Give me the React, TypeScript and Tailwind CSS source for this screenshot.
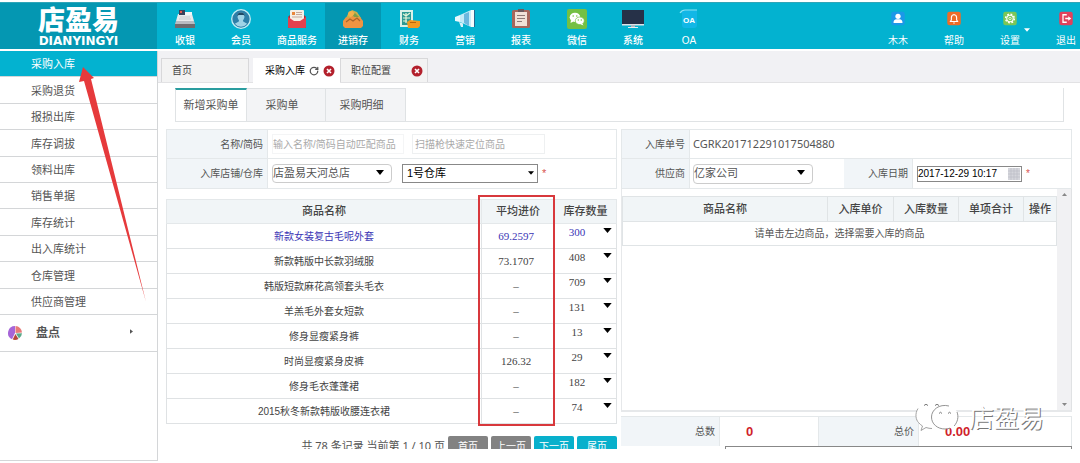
import type { ReactNode } from "react";
import { RotateCw } from "lucide-react";

type NavItem = { label: string; icon: ReactNode };

type Product = {
  name: string;
  price: string;
  stock: number;
};

const products: Product[] = [
  { name: "新款女装复古毛呢外套", price: "69.2597", stock: 300 },
  { name: "新款韩版中长款羽绒服", price: "73.1707", stock: 408 },
  { name: "韩版短款麻花高领套头毛衣", price: "–", stock: 709 },
  { name: "羊羔毛外套女短款", price: "–", stock: 131 },
  { name: "修身显瘦紧身裤", price: "–", stock: 13 },
  { name: "时尚显瘦紧身皮裤", price: "126.32", stock: 29 },
  { name: "修身毛衣蓬蓬裙", price: "–", stock: 182 },
  { name: "2015秋冬新款韩版收腰连衣裙", price: "–", stock: 74 },
];

const menu = [
  "采购入库",
  "采购退货",
  "报损出库",
  "库存调拔",
  "领料出库",
  "销售单据",
  "库存统计",
  "出入库统计",
  "仓库管理",
  "供应商管理",
];

const navItems: NavItem[] = [
  {
    label: "收银",
    icon: (
      <>
        <path d="M3 5h14l2 7H1z" fill="#e9eaec" />
        <path d="M4 1h6v5H4z" fill="#39415c" />
        <path d="M5 2h2v2H5z" fill="#e2574c" />
        <path d="M10 3h7v3h-7z" fill="#f4f6f7" />
        <path d="M5 8h10M4 10h12" stroke="#c9cbd0" strokeWidth="1" />
        <path d="M1 12h18l1 3H0z" fill="#b9bcc2" />
        <path d="M0 15h20v4H0z" fill="#6f6b6f" />
      </>
    ),
  },
  {
    label: "会员",
    icon: (
      <>
        <circle cx="10" cy="10" r="9.3" fill="#2d7fa8" stroke="#c5eef5" strokeWidth="1.3" />
        <path d="M6.5 7.5a3.5 4 0 0 1 7 0c0 2-1 3-1.500 3.800l.2 1.200 4 2.300A8 8 0 0 1 3.800 14.800l4-2.300.2-1.200C7.500 10.500 6.500 9.500 6.500 7.500z" fill="#9fd3e6" />
        <path d="M6.300 7.500a3.700 4 0 0 1 7.400 0l-1-1.500H7.500z" fill="#204a66" />
      </>
    ),
  },
  {
    label: "商品服务",
    icon: (
      <>
        <path d="M1 8l3-3h12l3 3v10a1 1 0 0 1-1 1H2a1 1 0 0 1-1-1z" fill="#a92b37" />
        <rect x="3" y="1" width="14" height="11" rx="1" fill="#f5efe6" />
        <path d="M9 3h6v1H9zM9 5h6v1H9zM5 7.500h10v1H5z" fill="#c4a79a" />
        <path d="M5 3h3v3H5z" fill="#e8873c" />
        <path d="M1 8l6 4h6l6-4v10a1 1 0 0 1-1 1H2a1 1 0 0 1-1-1z" fill="#e2404e" />
      </>
    ),
  },
  {
    label: "进销存",
    icon: (
      <>
        <path d="M3 9l2-4 4-4 5 2 4 6v4H2z" fill="#c9b04c" />
        <circle cx="8" cy="5" r="3" fill="#f3b04b" />
        <path d="M9 8l3-4 4 4z" fill="#7f9d47" />
        <path d="M0 12l3-4 3 1 4-2 3 2 4-1 3 4v5l-2 2H2l-2-2z" fill="#ef9442" />
        <path d="M3 13l4-3 3 2 4-3 3 3" stroke="#a9642b" strokeWidth="1.200" fill="none" />
      </>
    ),
  },
  {
    label: "财务",
    icon: (
      <>
        <path d="M1 1h13v17H1z" fill="#d9f1e9" />
        <path d="M3 3h9v13H3z" fill="#2e9a94" />
        <path d="M4 5l3 2 4-3M4 9h7M4 12h4M7 4v10" stroke="#e7f6d9" strokeWidth="1.200" fill="none" />
        <path d="M8 13l3-2 10 1v5l-2 2H9z" fill="#f19a22" />
        <path d="M11 13.500h6" stroke="#b8660b" strokeWidth="1" />
      </>
    ),
  },
  {
    label: "营销",
    icon: (
      <>
        <path d="M0 8l5-2v7l-5-1z" fill="#e9f8fd" />
        <path d="M5 6l11-5v17L5 13z" fill="#c4ebf8" />
        <path d="M9 5l5-2v14l-5-3z" fill="#6bb7de" />
        <path d="M16 1h3v17h-3z" fill="#f4fbfd" />
        <path d="M19 1h1v17h-1z" fill="#27668f" />
        <path d="M4 13l4 1.500V18H6z" fill="#d9f1f9" />
      </>
    ),
  },
  {
    label: "报表",
    icon: (
      <>
        <rect x="1" y="1" width="18" height="18" rx="1.500" fill="#a6675c" />
        <path d="M4 3h12v14H4z" fill="#f0e2d8" />
        <path d="M7 0h6v3H7z" fill="#6b5a5e" />
        <path d="M6 6.500h8M6 9.500h8M6 12.500h5" stroke="#8d7b78" strokeWidth="1.200" />
      </>
    ),
  },
  {
    label: "微信",
    icon: (
      <>
        <rect width="20" height="20" rx="2" fill="#74c043" />
        <ellipse cx="8" cy="8.300" rx="5.300" ry="4.600" fill="#fff" />
        <path d="M4 11l-.5 3 3-1.500z" fill="#fff" />
        <ellipse cx="12.800" cy="11.800" rx="4.500" ry="3.800" fill="#fff" stroke="#74c043" strokeWidth=".7" />
        <path d="M15 14l1.500 2.500-3-1.200z" fill="#fff" />
        <g fill="#74c043">
          <circle cx="6.200" cy="7" r=".8" />
          <circle cx="9.800" cy="7" r=".8" />
          <circle cx="11.300" cy="11" r=".7" />
          <circle cx="14.300" cy="11" r=".7" />
        </g>
      </>
    ),
  },
  {
    label: "系统",
    icon: (
      <>
        <path d="M-1 1h22v14H-1z" fill="#263148" />
        <path d="M-1 15h22v1.500H-1z" fill="#dce3e8" />
        <path d="M8 16h4v2H8z" fill="#aebac2" />
        <path d="M5 18h10v1H5z" fill="#e8eef1" />
      </>
    ),
  },
  {
    label: "OA",
    icon: (
      <>
        <path d="M1 4q2-3 5-3h12v15a3 3 0 0 1-3 3H6a3 3 0 0 1-3-3V4z" fill="#12b7e6" />
        <path d="M1 4q2-3 5-3h12" stroke="#8ce3f4" strokeWidth="1.200" fill="none" />
        <text x="10" y="13.500" textAnchor="middle" fontSize="8" fontWeight="bold" fill="#fff">
          OA
        </text>
      </>
    ),
  },
];

const userItems: NavItem[] = [
  {
    label: "木木",
    icon: (
      <>
        <rect x="1" y="1" width="18" height="18" rx="3" fill="#1b98e8" />
        <circle cx="10" cy="7" r="3.500" fill="#fff" />
        <path d="M4 16q0-5 4-5h4q4 0 4 5z" fill="#fff" />
      </>
    ),
  },
  {
    label: "帮助",
    icon: (
      <>
        <rect x="1" y="1" width="18" height="18" rx="3" fill="#ee6c27" />
        <path d="M5 14h10l-1.500-2V9a3.500 4 0 0 0-7 0v3zM9 16h2M10 4v1" stroke="#fff" strokeWidth="1.500" fill="none" strokeLinejoin="round" />
      </>
    ),
  },
  {
    label: "设置",
    icon: (
      <>
        <rect x="1" y="1" width="18" height="18" rx="3" fill="#7cc656" />
        <circle cx="10" cy="10" r="5.800" fill="none" stroke="#fff" strokeWidth="2" strokeDasharray="2.400 2.155" />
        <circle cx="10" cy="10" r="4.300" fill="none" stroke="#fff" strokeWidth="1.500" />
        <circle cx="10" cy="10" r="1.600" fill="none" stroke="#fff" strokeWidth="1" />
      </>
    ),
  },
  {
    label: "退出",
    icon: (
      <>
        <rect x="1" y="1" width="18" height="18" rx="3" fill="#e2415c" />
        <path d="M11 5H6v10h5" stroke="#fff" strokeWidth="1.700" fill="none" />
        <path d="M9 9h4V7l4 3-4 3v-2H9z" fill="#fff" />
      </>
    ),
  },
];

function Caret({ className }: { className?: string }) {
  return (
    <svg viewBox="0 0 10 6" className={className} aria-hidden="true">
      <path d="M0 0h10L5 6z" fill="currentColor" />
    </svg>
  );
}

function CloseBadge() {
  return (
    <svg viewBox="0 0 12 12" className="size-3" aria-hidden="true">
      <circle cx="6" cy="6" r="5.500" fill="#b3202c" />
      <path d="M4 4l4 4M8 4l-4 4" stroke="#fff" strokeWidth="1.600" />
    </svg>
  );
}

function Header() {
  return (
    <header className="my-0.5 flex h-[47px] shrink-0 border-t border-[#2fa5b8] bg-[#03b2d0] text-white">
      <div className="flex w-[157px] shrink-0 flex-col items-center bg-[#0497b2] pt-1">
        <span className="text-[27px] leading-7 font-black">店盈易</span>
        <span className="font-['DejaVu_Sans',sans-serif] text-xs leading-3 font-bold">DIANYINGYI</span>
      </div>
      <nav className="flex">
        {navItems.map((item) => (
          <a
            key={item.label}
            href="#"
            className={`flex w-14 flex-col items-center pt-1.5 ${item.label === "进销存" ? "bg-[#0497b2]" : ""}`}
          >
            <svg viewBox="0 0 20 20" className="size-5 overflow-visible" aria-hidden="true">
              {item.icon}
            </svg>
            <span className="mt-1 text-[10px] leading-4 font-medium">{item.label}</span>
          </a>
        ))}
      </nav>
      <nav className="ml-auto flex gap-7">
        {userItems.map((item) => (
          <a key={item.label} href="#" className="relative flex w-7 flex-col items-center pt-2">
            <svg viewBox="0 0 20 20" className="size-[18px]" aria-hidden="true">
              {item.icon}
            </svg>
            <span className="mt-[7px] text-[10px] leading-4">{item.label}</span>
            {item.label === "设置" && <Caret className="absolute top-6 -right-1.5 h-1.5 w-1.5" />}
          </a>
        ))}
      </nav>
    </header>
  );
}

function Sidebar() {
  return (
    <aside className="mb-0.5 w-[158px] shrink-0 border-r border-b border-[#d4d6d8] text-[11px] text-[#555]">
      <ul className="grid h-[264px] auto-rows-fr">
        {menu.map((label, index) => (
          <li
            key={label}
            className={`border-b border-[#d4d6d8] ${index === 0 ? "bg-[#03b2d0] text-white" : ""}`}
          >
            <a href="#" className="flex h-full items-center pt-0.5 pl-[31px]">
              {label}
            </a>
          </li>
        ))}
      </ul>
      <a href="#" className="flex h-[37px] items-center border-b border-[#d4d6d8] pl-2 text-xs font-bold">
        <svg viewBox="0 0 14 14" className="size-3.5" aria-hidden="true">
          <path d="M7 0a7 7 0 0 0-3 13.300L7 7z" fill="#a665d8" />
          <path d="M7.500 0A7 7 0 0 1 14 6.500L7.500 7z" fill="#e77a78" />
          <path d="M14 7.300A7 7 0 0 1 11 12.500L8 7.500z" fill="#5aa98a" />
          <path d="M4.700 13.600A7 7 0 0 0 10.500 12.900L7.400 8z" fill="#b5483a" />
        </svg>
        <span className="ml-3.5">盘点</span>
        <svg viewBox="0 0 4 6" className="mr-6 mb-1 ml-auto h-[5px] w-[3px]" aria-hidden="true">
          <path d="M0 0l4 3-4 3z" fill="#555" />
        </svg>
      </a>
    </aside>
  );
}

function PageTabs() {
  return (
    <div className="flex h-8 shrink-0 items-end gap-1 border-b border-[#e2e2e4] bg-[#f1f1f4] pl-[3px] text-[10px] text-[#444]">
      <button type="button" className="h-6 w-[88px] border border-b-0 border-[#d8d8da] bg-[#f3f3f3] pl-2.5 text-left">
        首页
      </button>
      <div className="-mb-px flex h-[25px] w-[87px] items-center bg-white pl-3 text-black">
        <span>采购入库</span>
        <button type="button" aria-label="刷新" className="ml-1">
          <RotateCw className="size-2.5" strokeWidth={3} color="#555" />
        </button>
        <button type="button" aria-label="关闭采购入库" className="ml-1">
          <CloseBadge />
        </button>
      </div>
      <div className="-ml-1 flex h-6 w-[88px] items-center justify-between border border-b-0 border-[#d8d8da] bg-[#f3f3f3] pr-1 pl-2.5">
        <span>职位配置</span>
        <button type="button" aria-label="关闭职位配置">
          <CloseBadge />
        </button>
      </div>
    </div>
  );
}

function SubTabs() {
  return (
    <div className="mr-2 flex h-[34px] shrink-0 border-r border-b border-[#e0e3e5] text-[11px] text-[#555]">
      <button type="button" className="w-[72px] border-t-2 border-r border-l border-t-[#2a9d9f] border-r-[#e0e3e5] border-l-[#e0e3e5] bg-white">
        新增采购单
      </button>
      <button type="button" className="w-[79px] border-t border-r border-[#dfe2e4] bg-[#f3f4f6] pr-2">
        采购单
      </button>
      <button type="button" className="w-20 border-t border-r border-[#dfe2e4] bg-[#f3f4f6] pr-2">
        采购明细
      </button>
    </div>
  );
}

const labelCell = "flex items-center justify-end border-r border-[#e4e8ea] bg-[#f1f5f8] pr-1";

function ProductForm() {
  return (
    <form className="grid grid-cols-[101px_1fr] grid-rows-[29px_29px] border border-[#e4e8ea] text-[10px] text-[#555]">
      <label htmlFor="keyword" className={`${labelCell} border-b`}>
        名称/简码
      </label>
      <div className="flex items-center gap-2 border-b border-[#e4e8ea] pl-1">
        <input
          id="keyword"
          placeholder="输入名称/简码自动匹配商品"
          className="h-5 w-[132px] border border-[#f4f5f6] placeholder:text-[#aaa]"
        />
        <input
          aria-label="扫描枪"
          placeholder="扫描枪快速定位商品"
          className="h-5 w-[133px] border border-[#eef0f1] pl-0.5 placeholder:text-[#aaa]"
        />
      </div>
      <label htmlFor="shop" className={labelCell}>
        入库店铺/仓库
      </label>
      <div className="flex items-center pl-1 text-[11px]">
        <div className="relative">
          <select id="shop" className="h-[19px] w-[120px] appearance-none rounded-sm border border-[#ccc] bg-white">
            <option>店盈易天河总店</option>
          </select>
          <Caret className="pointer-events-none absolute top-1.5 right-2 h-[5px] w-2 text-black" />
        </div>
        <div className="relative ml-2.5 text-black">
          <select aria-label="仓库" className="h-[19px] w-[136px] appearance-none border border-[#888] bg-white pl-1">
            <option>1号仓库</option>
          </select>
          <Caret className="pointer-events-none absolute top-1.5 right-1 h-1.5 w-1.5" />
        </div>
        <span className="ml-1 text-[#d9534f]">*</span>
      </div>
    </form>
  );
}

function ProductTable() {
  return (
    <div className="relative mt-2.5">
      <table className="w-full table-fixed border-collapse text-center text-[10px] text-[#444]">
        <thead>
          <tr className="h-6 bg-[#f1f5f7] text-[11px]">
            <th className="border border-[#e4e8ea] font-medium">商品名称</th>
            <th className="w-[73px] border border-[#e4e8ea] font-medium">平均进价</th>
            <th className="w-[62px] border border-[#e4e8ea] font-medium">库存数量</th>
          </tr>
        </thead>
        <tbody>
          {products.map((product, index) => (
            <tr key={product.name} className={`h-[25px] ${index === 0 ? "text-[#3a35b5]" : ""}`}>
              <td className="border border-[#dfe2e4]">{product.name}</td>
              <td className="border border-[#dfe2e4] pr-1 font-['Liberation_Serif',serif] text-[11px]">
                {product.price}
              </td>
              <td className="border border-[#dfe2e4] align-top font-['Liberation_Serif',serif] text-[11px] leading-4">
                <div className="flex items-start">
                  <span className="flex-1 pr-1">{product.stock}</span>
                  <button type="button" aria-label="展开库存" className="mt-1 mr-1">
                    <Caret className="h-[5px] w-[9px] text-black" />
                  </button>
                </div>
              </td>
            </tr>
          ))}
        </tbody>
      </table>
      {/* 高亮平均进价 */}
      <div className="pointer-events-none absolute -top-1 -bottom-0.5 right-[62px] w-[77px] border-2 border-[#d8383c]" />
    </div>
  );
}

function Pagination() {
  const button = "h-5 w-10 rounded-xs text-[10px] text-white";
  return (
    <div className="mt-3 flex shrink-0 items-center justify-end gap-[3px] font-['Noto_Sans','Noto_Sans_CJK_SC',sans-serif] text-[11px] leading-5 text-[#555]">
      <span>共 78 条记录 当前第 1 / 10 页</span>
      <button type="button" className={`${button} bg-[#828282]`}>首页</button>
      <button type="button" className={`${button} bg-[#828282]`}>上一页</button>
      <button type="button" className={`${button} bg-[#08b0cc]`}>下一页</button>
      <button type="button" className={`${button} bg-[#08b0cc]`}>尾页</button>
    </div>
  );
}

function OrderForm() {
  return (
    <form className="grid shrink-0 grid-cols-[68px_1fr_69px_158px] grid-rows-[29px_29px] border border-[#e4e8ea] text-[10px] text-[#555]">
      <span className={`${labelCell} border-b`}>入库单号</span>
      <output className="col-span-3 flex items-center border-b border-[#e4e8ea] pl-[3px] font-['Noto_Sans',sans-serif] text-[11px]">
        CGRK201712291017504880
      </output>
      <label htmlFor="supplier" className={labelCell}>
        供应商
      </label>
      <div className="flex items-center pl-[3px]">
        <div className="relative">
          <select id="supplier" className="h-5 w-[120px] appearance-none rounded-sm border border-[#ccc] bg-white text-[11px]">
            <option>亿家公司</option>
          </select>
          <Caret className="pointer-events-none absolute top-1.5 right-2 h-[5px] w-2 text-black" />
        </div>
      </div>
      <label htmlFor="date" className={labelCell}>
        入库日期
      </label>
      <div className="flex items-center pl-1">
        <div className="relative">
          <input
            id="date"
            defaultValue="2017-12-29 10:17"
            className="h-4 w-[105px] border border-[#888] text-[10px] text-black"
          />
          <svg viewBox="0 0 12 12" className="absolute top-0.5 right-0.5 size-3" aria-hidden="true">
            <path d="M0 0h12v12H0z" fill="#d5d6dc" />
            <path d="M0 3h12M0 6h12M0 9h12M3 0v12M6 0v12M9 0v12" stroke="#b9bac4" strokeWidth=".6" />
          </svg>
        </div>
        <span className="ml-1 text-[#d9534f]">*</span>
      </div>
    </form>
  );
}

function OrderTable() {
  const head = "border border-[#e0e4e6] font-medium";
  return (
    <div className="flex min-h-0 flex-1 border-b-2 border-l border-[#e6e8ea]">
      <div className="flex-1 pt-[7px]">
        <table className="w-full table-fixed border-collapse text-center text-[10px] text-[#555]">
          <thead>
            <tr className="h-[25px] bg-[#f1f5f7] text-[11px] text-[#444]">
              <th className={head}>商品名称</th>
              <th className={`${head} w-[66px]`}>入库单价</th>
              <th className={`${head} w-[65px]`}>入库数量</th>
              <th className={`${head} w-[65px]`}>单项合计</th>
              <th className={`${head} w-[33px]`}>操作</th>
            </tr>
          </thead>
          <tbody>
            <tr className="h-6">
              <td colSpan={5} className="border border-[#e0e4e6]">
                请单击左边商品，选择需要入库的商品
              </td>
            </tr>
          </tbody>
        </table>
      </div>
      <div className="flex w-[15px] flex-col items-center justify-between border-r border-[#e0e2e4] bg-[#f1f1f3] py-1 text-[#888]">
        <Caret className="h-[3px] w-[5px] rotate-180" />
        <Caret className="h-[3px] w-[5px]" />
      </div>
    </div>
  );
}

function Totals() {
  const value = "flex items-center border-r border-[#e4e8ea] pl-[26px] font-['Liberation_Sans',sans-serif] text-[13px] font-bold text-[#d01f2b]";
  return (
    <div className="mt-1 shrink-0">
      <div className="grid h-[30px] grid-cols-[99px_99px_100px_1fr] border-t border-[#e4e8ea] text-[10px] text-[#555]">
        <span className={labelCell}>总数</span>
        <span className={value}>0</span>
        <span className={labelCell}>总价</span>
        <span className={value}>0.00</span>
      </div>
      <div className="ml-[104px] h-[3px] border border-b-0 border-[#888]" />
    </div>
  );
}

function Watermark() {
  return (
    <div className="pointer-events-none absolute right-9 bottom-7 flex items-center gap-2">
      <svg viewBox="0 0 46 34" className="h-[34px] w-[46px]" aria-hidden="true">
        <path d="M19 1C9 1 1 7 1 14.500c0 4.500 2.500 8 6.500 10.500L6 30l6-3.500c2 .7 4.500 1 7 1 10 0 18-6 18-13S29 1 19 1z" fill="#fff" />
        <path d="M3 7.500C-.5 13 1 19 3.500 21.500c1 1.500 2.500 2.500 4 3.500L6 29.500l5-3c2 .7 4 1 6 1" stroke="#999" strokeWidth=".9" fill="none" />
        <path d="M30 4.500c-7.500 0-13.500 5-13.500 11.500S22.500 28 30 28c2 0 4-.3 5.500-.9l5 2.900-1.300-4.500C42 23.500 43.500 20 43.500 16c0-6.500-6-11.500-13.500-11.500z" fill="#fff" />
        <path d="M34 5C24 2.500 16.500 9 16.500 16S22.500 28 30 28c2 0 3.500-.3 5-.9M42 11c2 5 .5 10-2.800 14" stroke="#888" strokeWidth=".9" fill="none" />
        <path d="M9 4.500q2-2.500 4 0M20 4.500q2-2.500 4 0M24 12.500q1.500-2.500 3 0M33 12.500q1.500-2.500 3 0" stroke="#777" strokeWidth="1" fill="none" />
      </svg>
      <span className="text-[25px] leading-8 text-white [text-shadow:1px_1px_0_#777]">店盈易</span>
    </div>
  );
}

// 指向“采购入库”的红色箭头
function Arrow() {
  return (
    <svg viewBox="0 0 70 240" className="pointer-events-none absolute top-[14px] left-[78px] h-[240px] w-[70px]" aria-hidden="true">
      <path d="M5 2L1 17l5-1L68 237 13 14l3-1z" fill="#e63a3c" />
    </svg>
  );
}

export default function App() {
  return (
    <div className="flex h-screen flex-col overflow-hidden bg-white font-['Liberation_Sans','Noto_Sans_CJK_SC',sans-serif]">
      <Header />
      <div className="relative flex min-h-0 flex-1">
        <Sidebar />
        <main className="relative flex min-w-0 flex-1 flex-col pb-3.5">
          <PageTabs />
          <div className="flex min-h-0 flex-1 flex-col overflow-hidden pt-[5px] pr-2 pl-2">
            <div className="pl-[9px]">
              <SubTabs />
            </div>
            <div className="mt-[7px] flex min-h-0 flex-1 gap-1">
              <section className="min-w-0 flex-1">
                <ProductForm />
                <ProductTable />
                <Pagination />
              </section>
              <section className="flex min-w-0 flex-1 flex-col">
                <OrderForm />
                <OrderTable />
                <Totals />
              </section>
            </div>
          </div>
          <Watermark />
        </main>
        <Arrow />
      </div>
    </div>
  );
}
